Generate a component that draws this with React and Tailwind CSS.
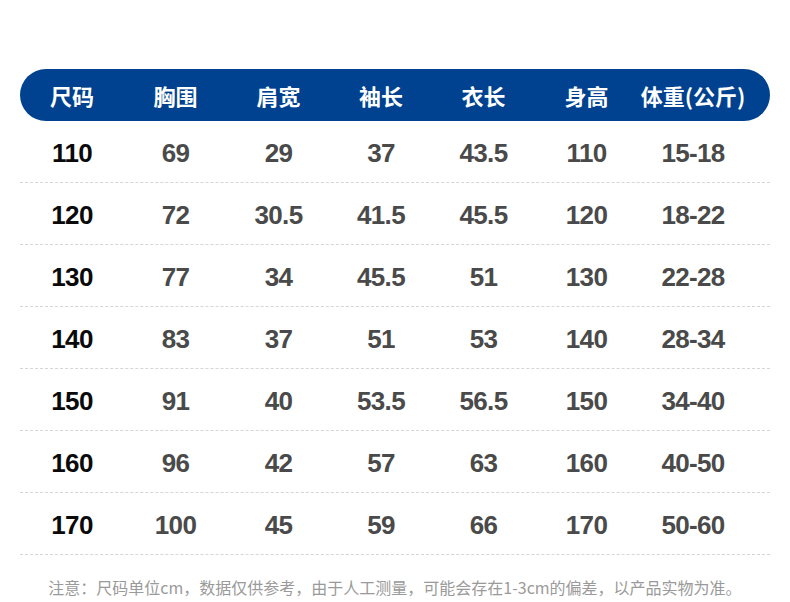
import React from 'react';

const headers = ['尺码', '胸围', '肩宽', '袖长', '衣长', '身高', '体重(公斤)'];

const rows = [
  ['110', '69', '29', '37', '43.5', '110', '15-18'],
  ['120', '72', '30.5', '41.5', '45.5', '120', '18-22'],
  ['130', '77', '34', '45.5', '51', '130', '22-28'],
  ['140', '83', '37', '51', '53', '140', '28-34'],
  ['150', '91', '40', '53.5', '56.5', '150', '34-40'],
  ['160', '96', '42', '57', '63', '160', '40-50'],
  ['170', '100', '45', '59', '66', '170', '50-60'],
];

const cols = 'grid grid-cols-[104px_103px_103px_102px_103px_103px_110px]';

const App = () => {
  return (
    <div className="w-[790px] h-[602px] bg-white overflow-hidden font-['Liberation_Sans','Noto_Sans_CJK_SC',sans-serif]">
      <div className="px-[20px] pt-[69px]">
        {/* Header */}
        <div className={`${cols} h-[52px] items-center rounded-full bg-[#00428f] text-white text-[22px] font-bold`}>
          {headers.map((h) => (
            <div key={h} className="text-center font-['Noto_Sans_CJK_SC',sans-serif] font-bold">{h}</div>
          ))}
        </div>

        {/* Rows */}
        {rows.map((r) => (
          <div key={r[0]} className={`${cols} h-[62px] pt-[3px] items-center border-b border-dashed border-[#d6d6d6]`}>
            {r.map((v, i) => (
              <div
                key={i}
                className={`text-center text-[26px] font-bold tracking-tight ${i === 0 ? 'text-[#0a0a0a]' : 'text-[#4a4a4a]'}`}
              >
                {v}
              </div>
            ))}
          </div>
        ))}

        {/* Note */}
        <p className="mt-[20px] text-center text-[16px] leading-6 text-[#9a9a9a] font-['Noto_Sans_CJK_SC',sans-serif]">
          注意：尺码单位cm，数据仅供参考，由于人工测量，可能会存在1-3cm的偏差，以产品实物为准。
        </p>
      </div>
    </div>
  );
};

export default App;
